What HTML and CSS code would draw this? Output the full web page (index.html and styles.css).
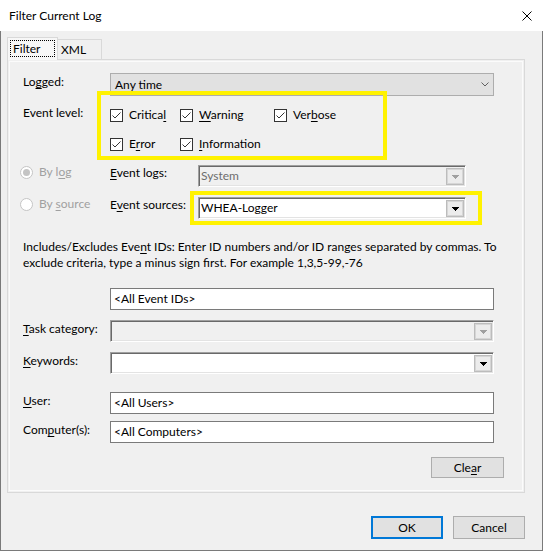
FILE: index.html
```html
<!DOCTYPE html>
<html>
<head>
<meta charset="utf-8">
<link rel="stylesheet" href="styles.css">
</head>
<body>
<div class="window">
  <div class="titlebar">
    <span class="title">Filter Current Log</span>
    <svg class="close" width="10" height="10" viewBox="0 0 10 10"><path d="M0.5 0.5L9.5 9.5M9.5 0.5L0.5 9.5" stroke="#000" stroke-width="1" fill="none"/></svg>
  </div>
  <div class="client">
    <div class="tabs">
      <div class="tab tab-active"><span class="focus">Filter</span></div>
      <div class="tab tab-plain">XML</div>
    </div>
    <div class="panel">
      <div class="row row-logged">
        <div class="label">Lo<u>g</u>ged:</div>
        <div class="select-modern">
          <span>Any time</span>
          <svg class="chev" width="8" height="5" viewBox="0 0 8 5"><path d="M0.5 0.5L4 4L7.5 0.5" stroke="#606060" fill="none"/></svg>
        </div>
      </div>
      <div class="row row-level">
        <div class="label">Event level:</div>
        <div class="checks">
          <div class="check"><svg class="cb" width="13" height="13" viewBox="0 0 13 13"><rect x="0.5" y="0.5" width="12" height="12" fill="#fff" stroke="#333"/><path d="M2.5 6.5L5 9L10.5 3.5" fill="none" stroke="#333"/></svg><span>Critica<u>l</u></span></div>
          <div class="check"><svg class="cb" width="13" height="13" viewBox="0 0 13 13"><rect x="0.5" y="0.5" width="12" height="12" fill="#fff" stroke="#333"/><path d="M2.5 6.5L5 9L10.5 3.5" fill="none" stroke="#333"/></svg><span><u>W</u>arning</span></div>
          <div class="check"><svg class="cb" width="13" height="13" viewBox="0 0 13 13"><rect x="0.5" y="0.5" width="12" height="12" fill="#fff" stroke="#333"/><path d="M2.5 6.5L5 9L10.5 3.5" fill="none" stroke="#333"/></svg><span>Ver<u>b</u>ose</span></div>
          <div class="check"><svg class="cb" width="13" height="13" viewBox="0 0 13 13"><rect x="0.5" y="0.5" width="12" height="12" fill="#fff" stroke="#333"/><path d="M2.5 6.5L5 9L10.5 3.5" fill="none" stroke="#333"/></svg><span>E<u>r</u>ror</span></div>
          <div class="check"><svg class="cb" width="13" height="13" viewBox="0 0 13 13"><rect x="0.5" y="0.5" width="12" height="12" fill="#fff" stroke="#333"/><path d="M2.5 6.5L5 9L10.5 3.5" fill="none" stroke="#333"/></svg><span><u>I</u>nformation</span></div>
        </div>
      </div>
      <div class="row row-bylog">
        <div class="radio-item disabled">
          <svg class="rb" width="13" height="13" viewBox="0 0 13 13"><circle cx="6.5" cy="6.5" r="6" fill="#fff" stroke="#c4c4c4"/><circle cx="6.5" cy="6.5" r="3.5" fill="#c4c4c4"/></svg>
          <span>By l<u>o</u>g</span>
        </div>
        <div class="sublabel"><u>E</u>vent logs:</div>
        <div class="combo combo-disabled combo-short">
          <span class="combo-text">System</span>
          <span class="drop"><svg width="7" height="4" viewBox="0 0 7 4"><path d="M0 0H7L3.5 4Z" fill="#a0a0a0"/></svg></span>
        </div>
      </div>
      <div class="row row-bysource">
        <div class="radio-item disabled">
          <svg class="rb" width="13" height="13" viewBox="0 0 13 13"><circle cx="6.5" cy="6.5" r="6" fill="#fff" stroke="#c4c4c4"/></svg>
          <span>By <u>s</u>ource</span>
        </div>
        <div class="sublabel">E<u>v</u>ent sources:</div>
        <div class="combo combo-short">
          <span class="combo-text">WHEA-Logger</span>
          <span class="drop"><svg width="7" height="4" viewBox="0 0 7 4"><path d="M0 0H7L3.5 4Z" fill="#000"/></svg></span>
        </div>
      </div>
      <p class="hint"><span class="hint-line">Includes/Excludes Eve<u>n</u>t IDs: Enter ID numbers and/or ID ranges separated by commas. To</span><span class="hint-line">exclude criteria, type a minus sign first. For example 1,3,5-99,-76</span></p>
      <div class="row row-ids">
        <div class="label"></div>
        <div class="textbox">&lt;All Event IDs&gt;</div>
      </div>
      <div class="row row-task">
        <div class="label"><u>T</u>ask category:</div>
        <div class="combo combo-disabled combo-wide">
          <span class="combo-text"></span>
          <span class="drop"><svg width="7" height="4" viewBox="0 0 7 4"><path d="M0 0H7L3.5 4Z" fill="#a0a0a0"/></svg></span>
        </div>
      </div>
      <div class="row row-keywords">
        <div class="label"><u>K</u>eywords:</div>
        <div class="combo combo-wide">
          <span class="combo-text"></span>
          <span class="drop"><svg width="7" height="4" viewBox="0 0 7 4"><path d="M0 0H7L3.5 4Z" fill="#000"/></svg></span>
        </div>
      </div>
      <div class="row row-user">
        <div class="label"><u>U</u>ser:</div>
        <div class="textbox">&lt;All Users&gt;</div>
      </div>
      <div class="row row-computer">
        <div class="label">Com<u>p</u>uter(s):</div>
        <div class="textbox">&lt;All Computers&gt;</div>
      </div>
      <div class="row row-clear">
        <div class="btn btn-clear">Cle<u>a</u>r</div>
      </div>
    </div>
    <div class="actions">
      <div class="btn btn-ok">OK</div>
      <div class="btn btn-cancel">Cancel</div>
    </div>
  </div>
  <div class="highlight highlight-levels"></div>
  <div class="highlight highlight-source"></div>
</div>
</body>
</html>
```
FILE: styles.css
```css
html, body {
  margin: 0;
  padding: 0;
  background: #f0f0f0;
}
body {
  font-family: Lato, "Noto Sans", sans-serif;
  font-size: 12px;
  line-height: 16px;
  color: #000;
}
u {
  text-decoration: underline;
  text-underline-offset: 2px;
}
.window {
  position: relative;
  width: 543px;
  height: 551px;
  display: flex;
  flex-direction: column;
  overflow: hidden;
}
.titlebar {
  height: 31px;
  flex: none;
  background: #fff;
  display: flex;
  align-items: center;
  justify-content: space-between;
  padding: 0 11px 0 9px;
}
.title {
  font-size: 12px;
}
.close {
  display: block;
}
.client {
  flex: 1;
  background: #f0f0f0;
  border: 1px solid #7a7a7a;
  border-top: none;
  padding: 6px 17px 0 6px;
}
.tabs {
  display: flex;
  align-items: flex-start;
  height: 22px;
}
.tab {
  box-sizing: border-box;
  border: 1px solid #d9d9d9;
}
.tab-active {
  position: relative;
  z-index: 1;
  width: 51px;
  height: 23px;
  border-bottom: none;
  background: #f7f7f7;
  padding: 2px 2px 0 2px;
}
.focus {
  display: block;
  height: 17px;
  box-sizing: border-box;
  border: 1px dotted #000;
  padding-left: 2px;
  line-height: 15px;
}
.tab-plain {
  width: 44px;
  height: 20px;
  margin-top: 2px;
  border-left: none;
  border-bottom: none;
  padding-left: 3px;
  line-height: 19px;
}
.panel {
  box-sizing: border-box;
  width: 518px;
  height: 434px;
  border: 1px solid #d9d9d9;
  box-shadow: inset 0 0 0 1px #f0f0f0, inset 0 0 0 2px #fbfbfb;
  padding: 0 20px 0 15px;
  display: flex;
  flex-direction: column;
}
.row {
  display: flex;
  align-items: flex-start;
}
.label {
  width: 87px;
  flex: none;
  padding-top: 1px;
}
.row-logged { margin-top: 13px; }
.row-level { margin-top: 8px; }
.row-bylog { margin-top: 13px; }
.row-bysource { margin-top: 10px; }
.row-ids { margin-top: 17px; }
.row-task { margin-top: 10px; }
.row-keywords { margin-top: 10px; }
.row-user { margin-top: 18px; }
.row-computer { margin-top: 7px; }
.row-clear { margin-top: 14px; justify-content: flex-end; }

.select-modern {
  box-sizing: border-box;
  width: 384px;
  height: 23px;
  background: #e1e1e1;
  border: 1px solid #adadad;
  display: flex;
  align-items: center;
  justify-content: space-between;
  padding: 1px 4px 0 4px;
}
.chev {
  display: block;
  margin-top: -1px;
}
.checks {
  display: grid;
  grid-template-columns: 70px 94px auto;
  row-gap: 13px;
  margin-top: 3px;
}
.check {
  display: flex;
  align-items: center;
  height: 16px;
  gap: 6px;
}
.cb {
  display: block;
  flex: none;
}
.radio-item {
  width: 90px;
  flex: none;
  margin-left: -3px;
  display: flex;
  align-items: center;
  gap: 6px;
  height: 16px;
  margin-top: -1px;
}
.radio-item.disabled {
  color: #a0a0a0;
}
.rb {
  display: block;
  flex: none;
}
.sublabel {
  width: 88px;
  flex: none;
  padding-top: 0;
}
.combo {
  box-sizing: border-box;
  height: 22px;
  display: flex;
  align-items: flex-start;
  justify-content: space-between;
  background: #fff;
  border: 1px solid;
  border-color: #a0a0a0 #fff #fff #a0a0a0;
  box-shadow: inset 1px 1px 0 #696969, inset -1px -1px 0 #e3e3e3;
  padding: 2px 1px 1px 2px;
}
.combo-short { width: 268px; }
.combo-wide { width: 384px; }
.combo-disabled {
  background: #f0f0f0;
  color: #6d6d6d;
}
.combo-text {
  padding-top: 0;
  line-height: 16px;
}
.drop {
  box-sizing: border-box;
  width: 18px;
  height: 17px;
  flex: none;
  background: #ececec;
  border: 1px solid #bcbcbc;
  box-shadow: inset 0 0 0 1px #d6d6d6;
  display: flex;
  align-items: center;
  justify-content: center;
}
.drop svg {
  display: block;
  shape-rendering: crispEdges;
}
.hint {
  margin: 20px 0 0 0;
  line-height: 16px;
}
.hint-line {
  display: block;
  white-space: nowrap;
}
.textbox {
  box-sizing: border-box;
  width: 384px;
  height: 22px;
  background: #fff;
  border: 1px solid #7a7a7a;
  padding: 2px 3px 0 3px;
}
.btn {
  box-sizing: border-box;
  background: #e1e1e1;
  border: 1px solid #adadad;
  text-align: center;
}
.btn-clear {
  width: 73px;
  height: 21px;
  line-height: 19px;
}
.actions {
  display: flex;
  justify-content: flex-end;
  gap: 10px;
  margin-top: 23px;
}
.btn-ok,
.btn-cancel {
  width: 72px;
  height: 23px;
  line-height: 21px;
}
.btn-ok {
  border: 2px solid #0078d7;
  line-height: 19px;
}
.highlight {
  position: absolute;
  box-sizing: border-box;
  border: 4px solid #fff200;
  pointer-events: none;
}
.highlight-levels {
  left: 97px;
  top: 91px;
  width: 290px;
  height: 69px;
}
.highlight-source {
  left: 190px;
  top: 191px;
  width: 292px;
  height: 34px;
}
```
